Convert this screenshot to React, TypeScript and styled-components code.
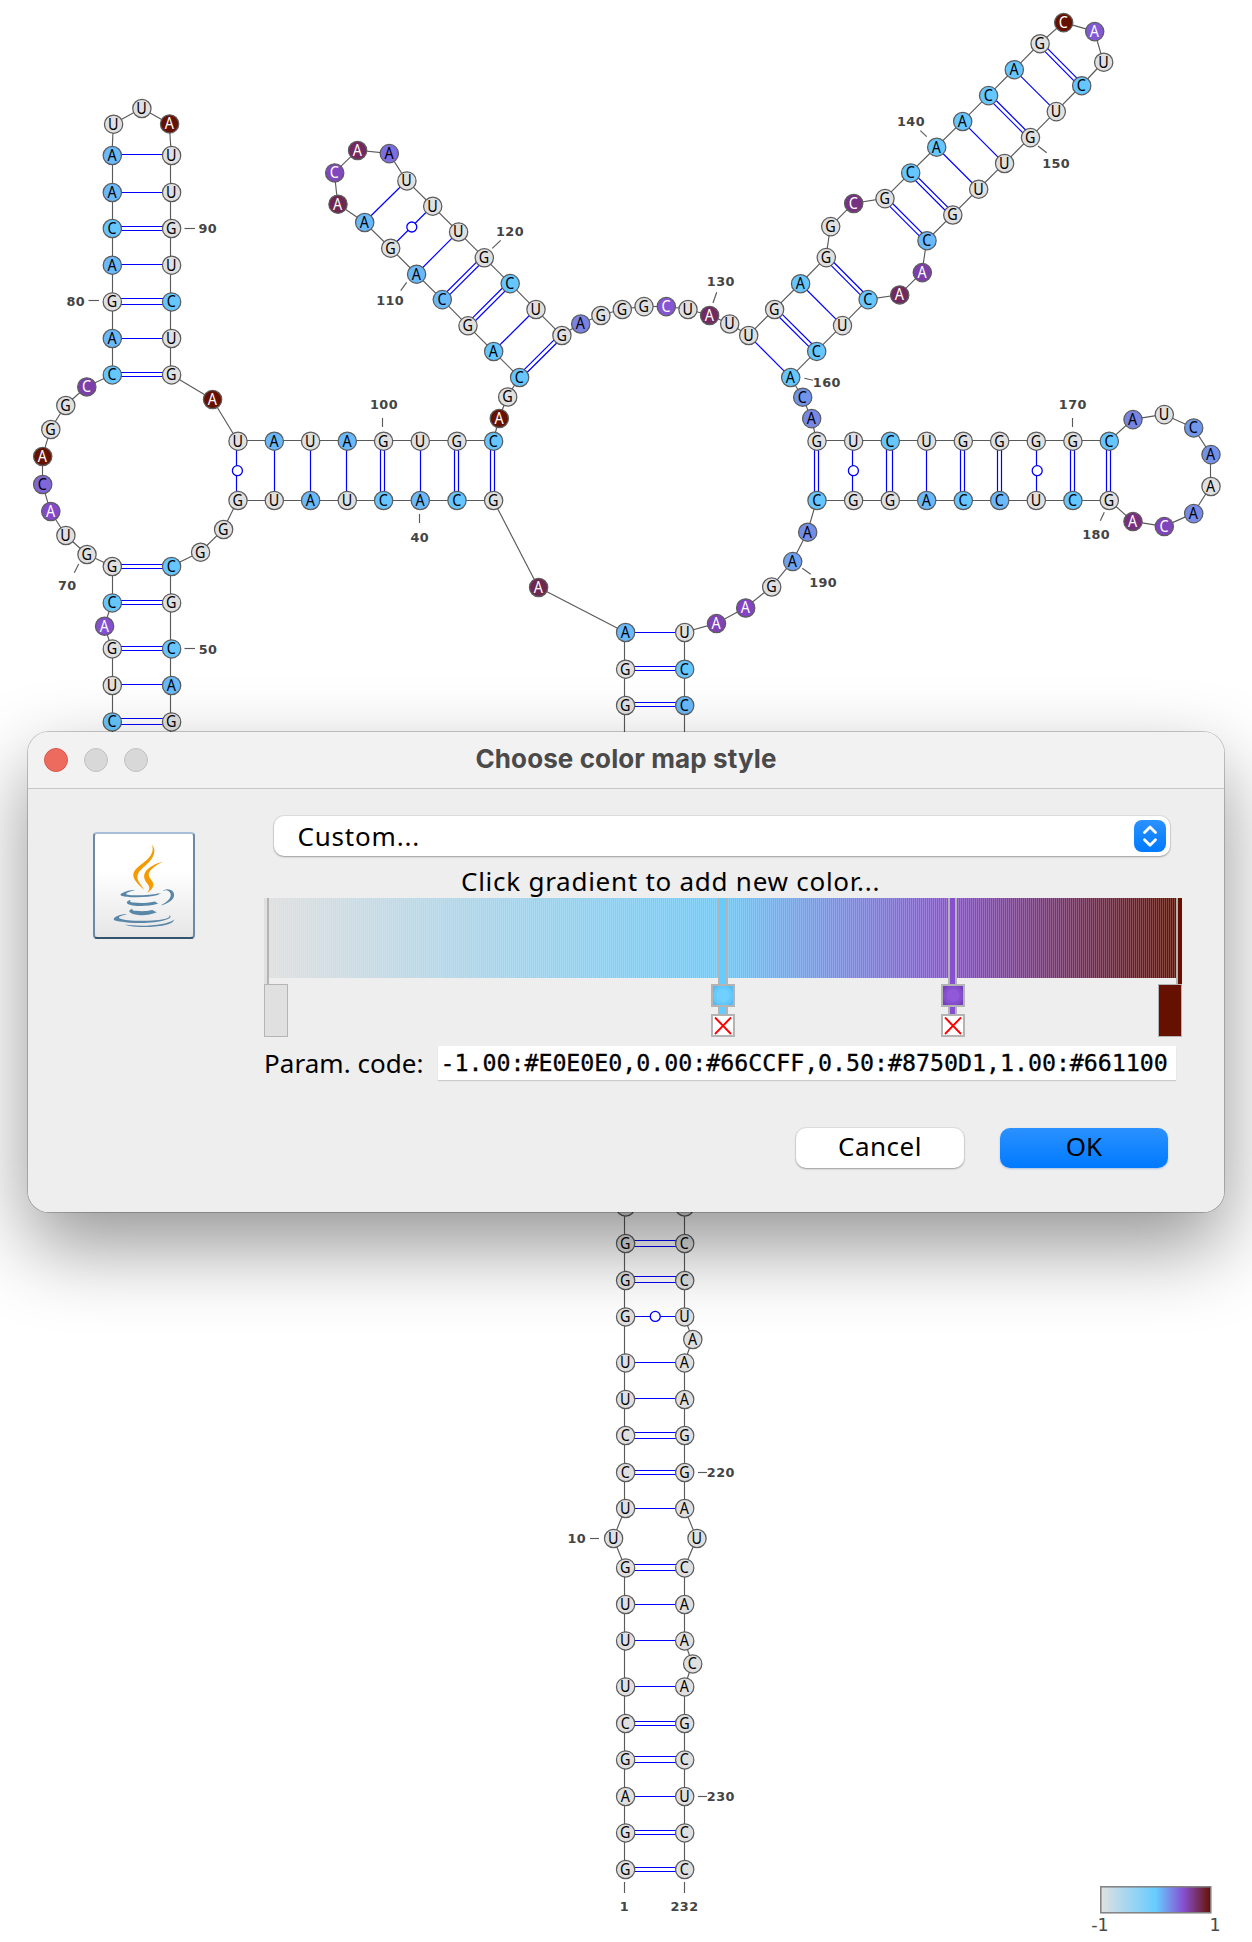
import React from "react";
import styled, { createGlobalStyle } from "styled-components";

type Nt = [string, number, number, string?];

const SKY = "#66c6ff";
const AZURE = "#69b9fb";
const RED = "#661100";

/* Backbone in 5' to 3' order: base, x, y, fill */
const bases: Nt[] = [
  ["G", 625.3, 1869.3], ["G", 625.3, 1832.7], ["A", 625.3, 1796.3], ["G", 625.3, 1759.7], ["C", 625.3, 1723.3],
  ["U", 625.3, 1686.7], ["U", 625.3, 1640.7], ["U", 625.3, 1604.3], ["G", 625.3, 1567.7], ["U", 613.3, 1538.3],
  ["U", 625.3, 1508.3], ["C", 625.3, 1472.3], ["C", 625.3, 1435.3], ["U", 625.3, 1399.3], ["U", 625.3, 1362.7],
  ["G", 625.3, 1316.7], ["G", 625.3, 1280.3], ["G", 625.3, 1243.3], ["G", 625.3, 1206.8],
  ["G", 625.3, 705.3], ["G", 625.3, 669], ["A", 625.3, 632.3, AZURE], ["A", 538.3, 587.3, "#6f2750"],
  ["G", 493.3, 500.3], ["C", 456.7, 500.3, SKY], ["A", 420, 500.3, AZURE], ["C", 383.3, 500.3, SKY],
  ["U", 347, 500.3], ["A", 310.3, 500.3, AZURE], ["U", 274, 500.3], ["G", 237.7, 500.3], ["G", 223.3, 529.3],
  ["G", 200.3, 552], ["C", 171.3, 566.3, SKY], ["G", 171.3, 602.7], ["C", 171.3, 648.7, SKY],
  ["A", 171.3, 685.3, AZURE], ["G", 171.3, 721.7], ["G", 171.3, 760], ["C", 112, 760],
  ["C", 112, 721.7, SKY], ["U", 112, 685.3], ["G", 112, 648.7], ["A", 104.3, 626, "#8350cf"],
  ["C", 112, 602.7, SKY], ["G", 112, 566.3], ["G", 86.7, 554.3], ["U", 65.6, 535.3], ["A", 50.5, 511.3, "#8349c8"],
  ["C", 42.4, 484.3, "#8066d8"], ["A", 42.4, 456.3, RED], ["G", 50.5, 429.3], ["G", 65.5, 405.3],
  ["C", 86.5, 386.7, "#7c3fa8"], ["C", 112, 374.7, SKY], ["A", 112, 338.3, AZURE], ["G", 112, 301.7],
  ["A", 112, 265, AZURE], ["C", 112, 228.3, SKY], ["A", 112, 192.3, AZURE], ["A", 112, 155.3, AZURE],
  ["U", 113.3, 124], ["U", 141.6, 108.3], ["A", 169.3, 123.7, RED], ["U", 171.3, 155.3], ["U", 171.3, 192.3],
  ["G", 171.3, 228.3], ["U", 171.3, 265], ["C", 171.3, 301.7, SKY], ["U", 171.3, 338.3], ["G", 171.3, 374.7],
  ["A", 212.3, 399.3, RED], ["U", 237.7, 441], ["A", 274, 441, AZURE], ["U", 310.3, 441], ["A", 347, 441, AZURE],
  ["G", 383.3, 441], ["U", 420, 441], ["G", 456.7, 441], ["C", 493.3, 441, SKY], ["A", 499, 418.3, RED],
  ["G", 507.4, 396.8], ["C", 519.3, 377.3, SKY], ["A", 493.4, 351.3, SKY], ["G", 467.7, 325.6],
  ["C", 442, 299.4, AZURE], ["A", 416.3, 274, AZURE], ["G", 390.4, 248], ["A", 364.4, 222.3, AZURE],
  ["A", 337.7, 204, "#6f2750"], ["C", 334.4, 172.7, "#8048bd"], ["A", 357.3, 150.3, "#73295f"],
  ["A", 389, 153.4, "#7c6de0"], ["U", 406.6, 180.7], ["U", 432.4, 206], ["U", 458.3, 231.8], ["G", 484, 257.6],
  ["C", 509.9, 283.4, SKY], ["U", 535.7, 309.3], ["G", 561.6, 335.3], ["A", 580.4, 323.8, "#7a83e3"],
  ["G", 600.6, 315.3], ["G", 622, 309.3], ["G", 643.7, 306.4], ["C", 666, 306.4, "#8555d3"], ["U", 687.7, 309.3],
  ["A", 709.3, 315.3, "#732a60"], ["U", 729.4, 323.8], ["U", 748.4, 335.3], ["G", 774.3, 309.3],
  ["A", 800.3, 283.5, SKY], ["G", 826, 257.4], ["G", 830.4, 226.4], ["C", 853.4, 203.3, "#763182"],
  ["G", 884.7, 198.4], ["C", 910.4, 172.7, SKY], ["A", 936.4, 147, SKY], ["A", 962.4, 121.3, SKY],
  ["C", 988.3, 95.4, SKY], ["A", 1014, 69.5, SKY], ["G", 1039.8, 43.5], ["C", 1063.4, 22.4, RED],
  ["A", 1094.4, 31.4, "#8159d3"], ["U", 1103.4, 62], ["C", 1081.4, 85.5, SKY], ["U", 1056, 111.4],
  ["G", 1030.2, 137.4], ["U", 1004.3, 163.3], ["U", 978.4, 189], ["G", 952.5, 214.8], ["C", 926.7, 240.5, AZURE],
  ["A", 922, 272.4, "#7c3fa5"], ["A", 899.4, 294.7, "#702a5c"], ["C", 867.8, 299.4, SKY], ["U", 842.2, 325.4],
  ["C", 816.4, 351.2, SKY], ["A", 790.4, 377.3, SKY], ["C", 802.4, 397, "#7194ea"], ["A", 811.4, 418.4, "#7887e5"],
  ["G", 816.7, 441], ["U", 853.3, 441], ["C", 890, 441, SKY], ["U", 926.4, 441], ["G", 963, 441],
  ["G", 999.4, 441], ["G", 1036, 441], ["G", 1072.6, 441], ["C", 1109, 441, SKY], ["A", 1132.7, 419.4, "#7884e4"],
  ["U", 1164, 414.4], ["C", 1193.4, 427.7, "#6f97ec"], ["A", 1210.7, 454.4, "#7491ea"], ["A", 1210.7, 486.3],
  ["A", 1193.4, 513.4, "#768ce8"], ["C", 1164, 526.4, "#8044bd"], ["A", 1132.7, 521.4, "#76307e"],
  ["G", 1109, 500.3], ["C", 1072.6, 500.3, SKY], ["U", 1036, 500.3], ["C", 999.4, 500.3, AZURE],
  ["C", 963, 500.3, SKY], ["A", 926.4, 500.3, AZURE], ["G", 890, 500.3], ["G", 853.3, 500.3],
  ["C", 816.7, 500.3, SKY], ["A", 807.4, 532, "#748ee8"], ["A", 792.4, 561.4, "#6da3f2"], ["G", 771.4, 586.8],
  ["A", 745.4, 607.8, "#8244c2"], ["A", 716.2, 623.4, "#8042b5"], ["U", 684.4, 632.3], ["C", 684.4, 669, SKY],
  ["C", 684.4, 705.3, AZURE], ["C", 684.4, 1206.8], ["C", 684.4, 1243.3], ["C", 684.4, 1280.3],
  ["U", 684.4, 1316.7], ["A", 692.5, 1339.3], ["A", 684.4, 1362.7], ["A", 684.4, 1399.3], ["G", 684.4, 1435.3],
  ["G", 684.4, 1472.3], ["A", 684.4, 1508.3], ["U", 696.7, 1538.3], ["C", 684.4, 1567.7], ["A", 684.4, 1604.3],
  ["A", 684.4, 1640.7], ["C", 692.4, 1663.7], ["A", 684.4, 1686.7], ["G", 684.4, 1723.3], ["C", 684.4, 1759.7],
  ["U", 684.4, 1796.3], ["C", 684.4, 1832.7], ["C", 684.4, 1869.3],
];

/* Pairs: x1, y1, x2, y2, gap between strokes (0 single, -1 wobble) */
type Pair = [number, number, number, number, number];
const rung = (x1: number, x2: number) => ([y, g]: number[]): Pair => [x1, y, x2, y, g];
const post = ([x, g]: number[]): Pair => [x, 441, x, 500.3, g];

const pairs: Pair[] = [
  ...[[1869.3, 4], [1832.7, 4], [1796.6, 0], [1759.7, 6], [1723.3, 4], [1686.7, 0], [1640.7, 0], [1604.7, 0],
    [1567.9, 6], [1508.6, 0], [1472.6, 4], [1435.7, 6], [1398.9, 0], [1362.7, 0], [1316.7, -1], [1279.9, 6],
    [1243.7, 6], [705.1, 4], [669.1, 4], [632.7, 0]].map(rung(625.3, 684.4)),
  ...[[155.2, 0], [192.7, 0], [228.8, 4], [264.8, 0], [301.8, 6], [338.7, 0], [375, 4], [566.9, 4], [602.9, 4],
    [648.8, 4], [684.8, 0], [721.8, 6]].map(rung(112, 171.3)),
  ...[[237, -1], [274.8, 0], [310.8, 0], [347, 0], [382.8, 4], [420.8, 0], [456.8, 4], [492.8, 4],
    [816.8, 4], [853, -1], [889.8, 6], [926.8, 0], [962.8, 4], [999.6, 4], [1036.8, -1], [1072.8, 4],
    [1108.8, 4]].map(post),
  [519.3, 377.3, 561.6, 335.3, 4], [493.4, 351.3, 535.7, 309.3, 0], [467.7, 325.6, 509.9, 283.4, 4],
  [442, 299.4, 484, 257.6, 4], [416.3, 274, 458.3, 231.8, 0], [390.4, 248, 432.4, 206, -1],
  [364.4, 222.3, 406.6, 180.7, 0], [748.4, 335.3, 790.4, 377.3, 0], [774.3, 309.3, 816.4, 351.2, 4],
  [800.3, 283.5, 842.2, 325.4, 0], [826, 257.4, 867.8, 299.4, 4], [884.7, 198.4, 926.7, 240.5, 4],
  [910.4, 172.7, 952.5, 214.8, 4], [936.4, 147, 978.4, 189, 0], [962.4, 121.3, 1004.3, 163.3, 0],
  [988.3, 95.4, 1030.2, 137.4, 4], [1014, 69.5, 1056, 111.4, 0], [1039.8, 43.5, 1081.4, 85.5, 4],
];

/* Numbering: label, centre x, baseline y, tick x1 y1 x2 y2 */
const marks: [string, number, number, number, number, number, number][] = [
  ["1", 624.5, 1911, 624.5, 1882, 624.5, 1893], ["10", 576.8, 1543, 590, 1538.5, 599, 1538.5],
  ["40", 419.8, 542.3, 419.5, 514, 419.5, 523], ["50", 208, 654, 184.5, 648.5, 195, 648.5],
  ["70", 67.2, 590, 78.7, 564, 74.3, 572.7], ["80", 75.8, 306.7, 88.5, 300.5, 99, 300.5],
  ["90", 207.7, 233.7, 184.5, 228.5, 195, 228.5], ["100", 384, 409, 382.5, 418, 382.5, 427],
  ["110", 390.2, 305, 406.7, 282.3, 400.7, 290.7], ["120", 510, 236.7, 492.3, 248.3, 500.7, 240.3],
  ["130", 720.8, 286, 716.7, 292.3, 713, 303], ["140", 911, 126, 920.3, 130.7, 926.7, 136.7],
  ["150", 1056.2, 168.3, 1038, 146, 1046.7, 152.7], ["160", 826.8, 387, 804.3, 378.3, 813, 380.3],
  ["170", 1072.8, 409.3, 1072.5, 418, 1072.5, 427], ["180", 1096.2, 539.3, 1104.3, 512.3, 1100.3, 520.7],
  ["190", 823.2, 587.3, 802.3, 568.3, 810.7, 574.3], ["220", 720.8, 1477, 698, 1472.5, 707, 1472.5],
  ["230", 720.8, 1801, 698, 1796.5, 707, 1796.5], ["232", 684.5, 1911, 684.5, 1882, 684.5, 1893],
];

const needsLightText = (c?: string) => {
  if (!c) return false;
  const n = parseInt(c.slice(1), 16);
  return ((n >> 8) & 255) < 0x5e;
};

const snap = (v: number) => {
  if (v === 625.3) return 624.5;
  if (v === 171.3) return 170.5;
  if (v === 441) return 440.5;
  return Math.floor(v) + 0.5;
};

const GlobalStyle = createGlobalStyle`
  html, body { margin: 0; padding: 0; background: #fff; }
  body { width: 1252px; height: 1942px; overflow: hidden; }
  * { box-sizing: border-box; }
`;

const Page = styled.main`
  position: relative;
  width: 1252px;
  height: 1942px;
  overflow: hidden;
  background: #fff;
  color: #000;
  font-family: "Noto Sans", "DejaVu Sans", sans-serif;
`;

const Structure = styled.svg`
  display: block;
  width: 1252px;
  height: 1942px;
`;

const Backbone = styled.line`
  stroke: #5a5a5a;
  stroke-width: 1.15;
`;

const Bond = styled.line`
  stroke: #0000fa;
  stroke-width: 1.2;
`;

const Wobble = styled.circle`
  fill: #fff;
  stroke: #0000fa;
  stroke-width: 1.3;
`;

const Disc = styled.circle<{ $fill: string }>`
  fill: ${(p) => p.$fill};
  stroke: #5c5c5c;
  stroke-width: 1.25;
`;

const BaseLetter = styled.text<{ $light: boolean }>`
  fill: ${(p) => (p.$light ? "#fff" : "#000")};
  font: 15.6px "Noto Sans", sans-serif;
  text-anchor: middle;
`;

const MarkLabel = styled.text`
  fill: #444;
  font: bold 12.8px "DejaVu Sans", sans-serif;
  letter-spacing: 0.4px;
  text-anchor: middle;
`;

const LegendLabel = styled.text`
  fill: #484848;
  font: 17.5px "DejaVu Sans", sans-serif;
  text-anchor: middle;
`;

const Dialog = styled.section`
  position: absolute;
  left: 28px;
  top: 732px;
  width: 1196px;
  height: 480px;
  display: flex;
  flex-direction: column;
  border-radius: 21px;
  overflow: hidden;
  background: #eee;
`;

const DialogShadow = styled.div`
  position: absolute;
  left: 28px;
  top: 732px;
  width: 1196px;
  height: 480px;
  border-radius: 21px;
  box-shadow: 0 0 0 1px rgba(0, 0, 0, 0.2), 0 34px 80px rgba(0, 0, 0, 0.42);
`;

const TitleBar = styled.header`
  flex: none;
  display: grid;
  grid-template-columns: 1fr auto 1fr;
  align-items: center;
  height: 57px;
  padding: 0 16px;
  background: #f2f2f2;
  border-bottom: 1px solid #c6c6c6;
`;

const Lights = styled.div`
  display: flex;
  gap: 16px;
`;

const Light = styled.span<{ $fill: string; $edge: string }>`
  width: 24px;
  height: 24px;
  border-radius: 50%;
  background: ${(p) => p.$fill};
  border: 1px solid ${(p) => p.$edge};
`;

const Title = styled.h1`
  margin: 0;
  padding-bottom: 2px;
  font: 700 26px/30px Inter, sans-serif;
  letter-spacing: 0.1px;
  color: #4a4a4a;
  white-space: nowrap;
`;

const Body = styled.div`
  display: flex;
  flex: 1;
  padding: 27px 42px 0 65px;
`;

const IconTile = styled.div`
  flex: none;
  width: 102px;
  height: 107px;
  margin-top: 16px;
  padding: 10px 0 0 7px;
  border: 2px solid;
  border-color: #a9bfd8 #6c8aa8 #35536f #6c8aa8;
  border-radius: 4px;
  background: linear-gradient(#fff 35%, #e6e6e6);
`;

const Form = styled.div`
  display: flex;
  flex-direction: column;
  width: 918px;
  margin-left: 69px;
`;

const Combo = styled.div`
  display: flex;
  align-items: center;
  justify-content: space-between;
  width: 896px;
  height: 40px;
  margin-left: 10px;
  padding: 0 4px 0 23.5px;
  border-radius: 10px;
  background: #fff;
  box-shadow: 0 0 0 1px rgba(0, 0, 0, 0.06), 0 1px 2px rgba(0, 0, 0, 0.3);
  font-size: 26px;
  line-height: 38px;
  letter-spacing: 0.8px;
`;

const Stepper = styled.span`
  display: flex;
  width: 32px;
  height: 32px;
  border-radius: 8px;
  background: linear-gradient(#2b91ff, #007aff);
`;

const Hint = styled.p`
  margin: 5px 0 0;
  height: 37px;
  padding-left: 197px;
  font-size: 26px;
  line-height: 41px;
  letter-spacing: 0.74px;
  white-space: nowrap;
`;

const Editor = styled.div`
  position: relative;
  height: 139px;
`;

const Ramp = styled.div`
  height: 79.5px;
  background:
    repeating-linear-gradient(90deg, rgba(238, 238, 238, 0.24) 0 1px, transparent 1px 2px),
    linear-gradient(90deg, #e0e0e0 4px, #66ccff 460px, #8750d1 688px, #661100 914px);
`;

const Stem = styled.span<{ $x: number; $w: number; $fill: string; $edges: string }>`
  position: absolute;
  left: ${(p) => p.$x}px;
  top: 0;
  width: ${(p) => p.$w}px;
  height: 138px;
  background: ${(p) => p.$fill};
  border: solid #b4b4b4;
  border-width: ${(p) => p.$edges};
`;

const Swatch = styled.span<{ $x: number; $tall?: boolean; $bg: string }>`
  position: absolute;
  left: ${(p) => p.$x}px;
  top: 86px;
  width: 24px;
  height: ${(p) => (p.$tall ? 53 : 23)}px;
  border: ${(p) => (p.$tall ? "1.5px" : "2px")} solid #b4b4b4;
  background: ${(p) => p.$bg};
`;

const Remove = styled.span<{ $x: number }>`
  position: absolute;
  left: ${(p) => p.$x}px;
  top: 116px;
  display: flex;
  width: 24px;
  height: 23px;
  border: 2px solid #b4b4b4;
  background: #fff;
`;

const CodeRow = styled.label`
  display: flex;
  align-items: center;
  height: 34px;
  margin-top: 9px;
  font-size: 26px;
  letter-spacing: 0.05px;
`;

const CodeLabel = styled.span`
  width: 174px;
  line-height: 32px;
  white-space: nowrap;
`;

const CodeField = styled.span`
  width: 738px;
  height: 34px;
  padding-left: 2.5px;
  background: #fff;
  box-shadow: 0 1px 1px rgba(0, 0, 0, 0.14);
  font: 23.3px/33px "DejaVu Sans Mono", monospace;
  letter-spacing: -0.04px;
  -webkit-text-stroke: 0.3px #000;
  white-space: nowrap;
`;

const Actions = styled.div`
  display: flex;
  justify-content: flex-end;
  gap: 36px;
  margin-top: 48px;
  padding-right: 14px;
`;

const Button = styled.button<{ $primary?: boolean }>`
  width: 168px;
  height: 40px;
  padding: 0 0 4px;
  border: 0;
  border-radius: 10px;
  background: ${(p) => (p.$primary ? "linear-gradient(#2b91ff, #007aff)" : "#fff")};
  box-shadow: ${(p) =>
    p.$primary ? "0 1px 2px rgba(0,90,220,.3)" : "0 0 0 1px rgba(0,0,0,.06), 0 1px 2px rgba(0,0,0,.3)"};
  color: #000;
  font: 26px/36px "Noto Sans", sans-serif;
  letter-spacing: ${(p) => (p.$primary ? "0" : "0.5px")};
`;

const JavaCup = () => (
  <svg width="84" height="84" viewBox="0 0 128 128">
    <g fill="#5a86a8">
      <path d="M47.617 98.12s-4.767 2.774 3.397 3.71c9.892 1.13 14.947.968 25.845-1.092 0 0 2.871 1.795 6.873 3.351-24.439 10.47-55.308-.607-36.115-5.969zm-2.988-13.665s-5.348 3.959 2.823 4.805c10.567 1.091 18.91 1.18 33.354-1.6 0 0 1.993 2.025 5.132 3.131-29.542 8.64-62.446.68-41.309-6.336z" />
      <path d="M102.123 108.229s3.529 2.91-3.888 5.159c-14.102 4.272-58.706 5.56-71.094.171-4.451-1.938 3.899-4.625 6.526-5.192 2.739-.593 4.303-.485 4.303-.485-4.953-3.487-32.013 6.85-13.743 9.815 49.821 8.076 90.817-3.637 77.896-9.468zM49.912 70.294s-22.686 5.389-8.033 7.348c6.188.828 18.518.638 30.011-.326 9.39-.789 18.813-2.474 18.813-2.474s-3.308 1.419-5.704 3.053c-23.042 6.061-67.544 3.238-54.731-2.958 10.832-5.239 19.644-4.643 19.644-4.643zm40.697 22.747c23.421-12.167 12.591-23.86 5.032-22.285-1.848.385-2.677.72-2.677.72s.688-1.079 2-1.543c14.953-5.255 26.451 15.503-4.823 23.725 0-.002.359-.327.468-.617z" />
      <path d="M52.214 126.021c22.476 1.437 57-.8 57.817-11.436 0 0-1.571 4.032-18.577 7.231-19.186 3.612-42.854 3.191-56.887.874 0 .001 2.875 2.381 17.647 3.331z" />
    </g>
    <g fill="#f59b00">
      <path d="M69.802 61.271c6.025 6.935-1.58 13.17-1.58 13.17s15.289-7.891 8.269-17.777c-6.559-9.215-11.587-13.792 15.635-29.58 0 .001-42.731 10.67-22.324 34.187z" />
      <path d="M76.491 1.587S89.459 14.563 64.188 34.51c-20.266 16.006-4.621 25.13-.007 35.559-11.831-10.673-20.509-20.07-14.688-28.815C58.041 28.42 81.722 22.195 76.491 1.587z" />
    </g>
  </svg>
);

const Cross = () => (
  <svg width="20" height="19" viewBox="0 0 20 19">
    <path d="M2 1.5L18 18M18 1.5L2 18" stroke="#f00" strokeWidth="1.8" />
  </svg>
);

const BasePair = ({ pair }: { pair: Pair }) => {
  const [x1, y1, x2, y2, gap] = pair;
  if (gap === -1) {
    const h = y1 === y2;
    const v = x1 === x2;
    const a = v ? Math.floor(x1 - 0.3) + 0.5 : x1;
    const b = v ? Math.floor(x2 - 0.3) + 0.5 : x2;
    const c = h ? Math.floor(y1 - 0.3) + 0.5 : y1;
    const d = h ? Math.floor(y2 - 0.3) + 0.5 : y2;
    return (
      <>
        <Bond x1={a} y1={c} x2={b} y2={d} />
        <Wobble cx={(x1 + x2) / 2 + 0.4} cy={(y1 + y2) / 2 - (h ? 0.3 : 0)} r={5} />
      </>
    );
  }
  const len = Math.hypot(x2 - x1, y2 - y1);
  const nx = -(y2 - y1) / len;
  const ny = (x2 - x1) / len;
  const offsets = gap === 0 ? [0] : [-gap / 2, gap / 2];
  const cx = x1 === x2 ? Math.floor(x1 - 0.3) + 0.5 - x1 : 0;
  const cy = y1 === y2 ? Math.floor(y1 - 0.3) + 0.5 - y1 : 0;
  return (
    <>
      {offsets.map((o) => (
        <Bond key={o} x1={x1 + nx * o + cx} y1={y1 + ny * o + cy} x2={x2 + nx * o + cx} y2={y2 + ny * o + cy} />
      ))}
    </>
  );
};

const SecondaryStructure = () => (
  <Structure viewBox="0 0 1252 1942">
    <defs>
      <linearGradient id="scale">
        <stop offset="0" stopColor="#e0e0e0" />
        <stop offset="0.5" stopColor="#66ccff" />
        <stop offset="0.75" stopColor="#8750d1" />
        <stop offset="1" stopColor="#661100" />
      </linearGradient>
    </defs>
    {bases.slice(1).map(([, x, y], i) => {
      const [, px, py] = bases[i];
      const sx = px === x;
      const sy = py === y;
      return (
        <Backbone
          key={i}
          x1={sx ? snap(px) : px}
          y1={sy ? snap(py) : py}
          x2={sx ? snap(x) : x}
          y2={sy ? snap(y) : y}
        />
      );
    })}
    {pairs.map((p, i) => (
      <BasePair key={i} pair={p} />
    ))}
    {bases.map(([b, x, y, c], i) => (
      <g key={i}>
        <Disc cx={x + 0.3} cy={y + 0.2} r={9.15} $fill={c || "#e0e0e0"} />
        <BaseLetter $light={needsLightText(c)} transform={`translate(${x} ${y + 5.5}) scale(0.92 1)`}>
          {b}
        </BaseLetter>
      </g>
    ))}
    {marks.map(([t, x, y, x1, y1, x2, y2]) => (
      <g key={t}>
        <Backbone x1={x1} y1={y1} x2={x2} y2={y2} />
        <MarkLabel x={x} y={y - 0.5}>
          {t}
        </MarkLabel>
      </g>
    ))}
    <rect x="1100.8" y="1886.8" width="110" height="26" fill="url(#scale)" stroke="#808080" strokeWidth="1.5" />
    <LegendLabel x="1100" y="1930.5">-1</LegendLabel>
    <LegendLabel x="1215" y="1930.5">1</LegendLabel>
  </Structure>
);

const GradientEditor = () => (
  <Editor>
    <Ramp />
    <Stem $x={0} $w={5} $fill="#e0e0e0" $edges="0 2px 0 0" />
    <Stem $x={454} $w={10} $fill="#66ccff" $edges="0 2px" />
    <Stem $x={684} $w={9} $fill="#8750d1" $edges="0 2px" />
    <Stem $x={912} $w={6} $fill="#661100" $edges="0 0 0 2px" />
    <Swatch $x={0} $tall $bg="#e0e0e0" />
    <Swatch $x={447.4} $bg="radial-gradient(circle, #70d0ff 0 6px, #66c9fc 7px 9px, #58bbf2 11px)" />
    <Remove $x={447.4}>
      <Cross />
    </Remove>
    <Swatch $x={677.4} $bg="radial-gradient(circle, #9159d9 0 6px, #854fce 7px 9px, #7640be 11px)" />
    <Remove $x={677.4}>
      <Cross />
    </Remove>
    <Swatch $x={894} $tall $bg="#661100" />
  </Editor>
);

export default function App() {
  return (
    <Page>
      <GlobalStyle />
      <SecondaryStructure />
      <DialogShadow />
      <Dialog>
        <TitleBar>
          <Lights>
            <Light $fill="#ec6a5e" $edge="#d9594e" />
            <Light $fill="#d8d8d8" $edge="#c2c2c2" />
            <Light $fill="#d8d8d8" $edge="#c2c2c2" />
          </Lights>
          <Title>Choose color map style</Title>
          <span />
        </TitleBar>
        <Body>
          <IconTile>
            <JavaCup />
          </IconTile>
          <Form>
            <Combo>
              Custom...
              <Stepper>
                <svg width="32" height="32" viewBox="0 0 32 32" fill="none" stroke="#fff" strokeWidth="2.8" strokeLinecap="round" strokeLinejoin="round">
                  <path d="M10.5 12.5L16 7L21.5 12.5M10.5 19.8L16 25.3L21.5 19.8" />
                </svg>
              </Stepper>
            </Combo>
            <Hint>Click gradient to add new color...</Hint>
            <GradientEditor />
            <CodeRow>
              <CodeLabel>Param. code:</CodeLabel>
              <CodeField>-1.00:#E0E0E0,0.00:#66CCFF,0.50:#8750D1,1.00:#661100</CodeField>
            </CodeRow>
            <Actions>
              <Button>Cancel</Button>
              <Button $primary>OK</Button>
            </Actions>
          </Form>
        </Body>
      </Dialog>
    </Page>
  );
}
